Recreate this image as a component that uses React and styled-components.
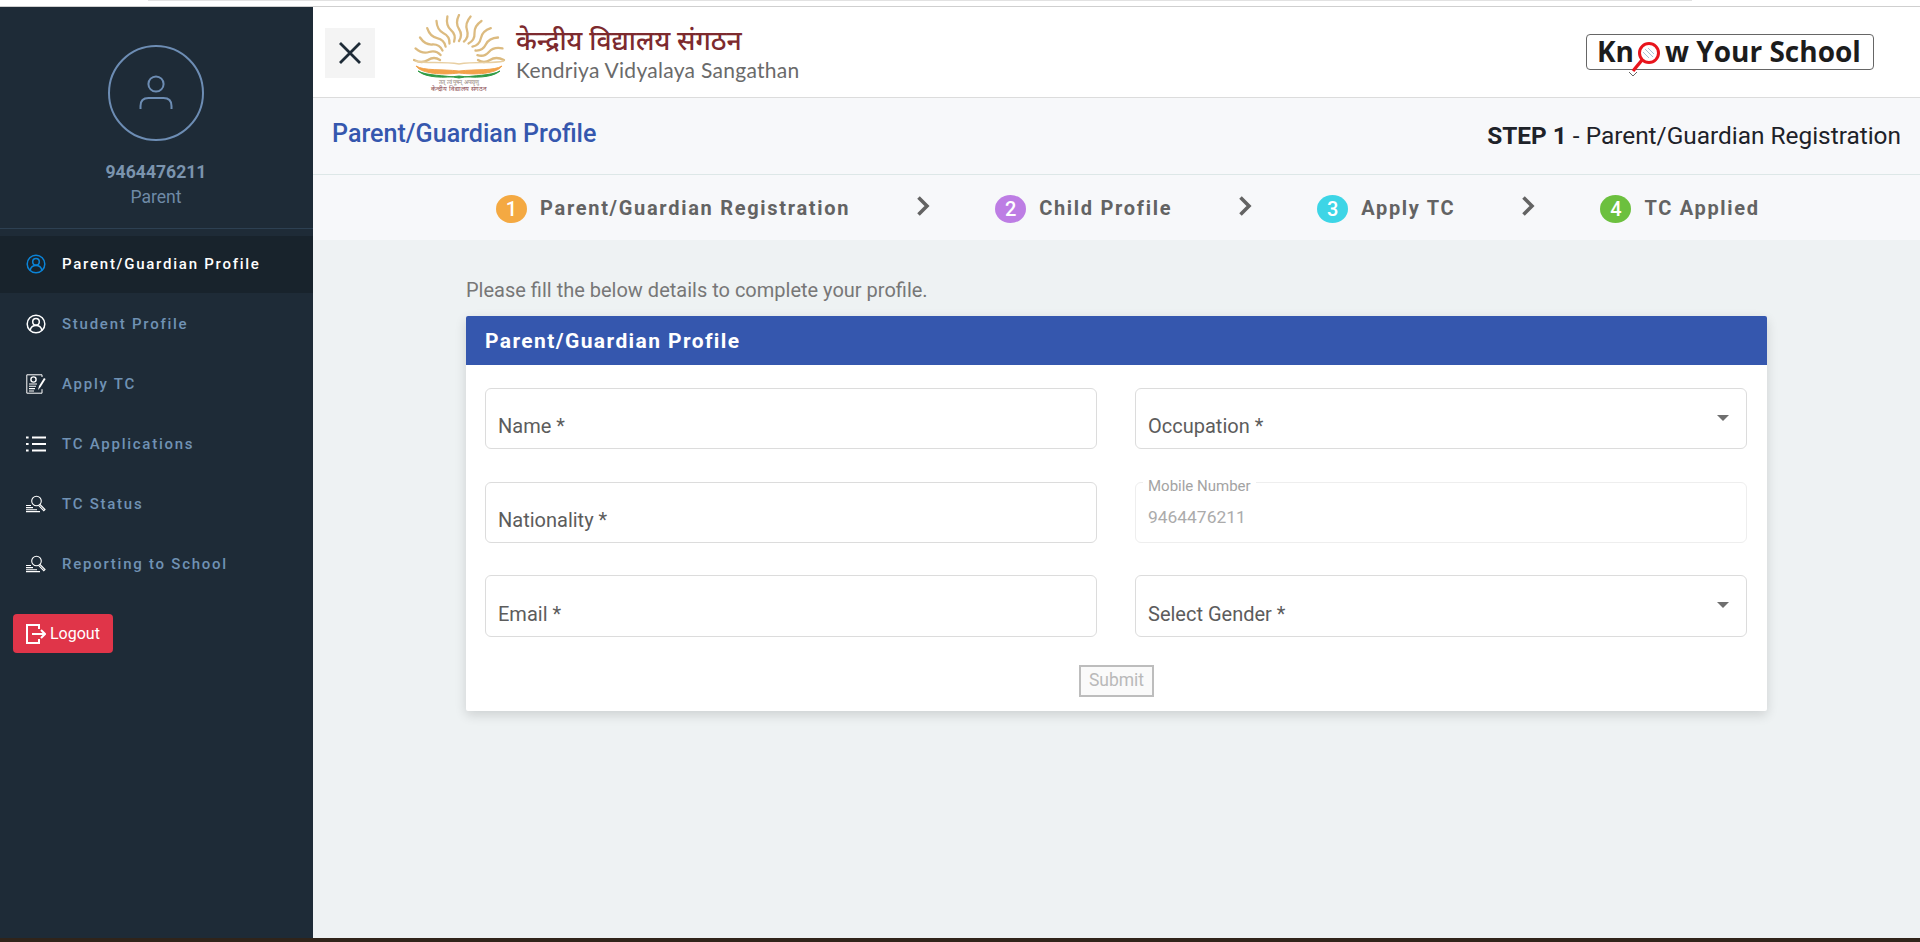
import React from "react";
import styled, { createGlobalStyle } from "styled-components";

const GlobalStyle = createGlobalStyle`
  html, body { margin: 0; padding: 0; background: #fff; }
  body { font-family: Roboto, "Liberation Sans", sans-serif; overflow: hidden; }
  * { box-sizing: border-box; }
`;

const Page = styled.div`
  width: 1920px;
  height: 942px;
  display: flex;
  flex-direction: column;
  overflow: hidden;
`;
const BrowserEdge = styled.div`
  height: 7px;
  flex: none;
  background: #fff;
  border-bottom: 1px solid #cfcfcf;
  padding: 0 228px 0 148px;
  &::before {
    content: "";
    display: block;
    height: 1px;
    background: #e2e2e2;
  }
`;
const TaskEdge = styled.div`
  height: 4px;
  flex: none;
  background: #30241a;
`;
const Shell = styled.div`
  flex: 1;
  display: flex;
  min-height: 0;
`;

const Sidebar = styled.aside`
  width: 313px;
  flex: none;
  background: #1e2b37;
  display: flex;
  flex-direction: column;
`;
const UserBox = styled.div`
  height: 222px;
  padding: 38px 1px 0 0;
  border-bottom: 1px solid #2d4052;
  display: flex;
  flex-direction: column;
  align-items: center;
  flex: none;
`;
const Avatar = styled.div`
  width: 96px;
  height: 96px;
  border-radius: 50%;
  border: 2px solid #6d8db4;
  display: flex;
  align-items: center;
  justify-content: center;
  color: #6d8db4;
`;
const Phone = styled.div`
  margin-top: 21px;
  font-size: 17.6px;
  line-height: 20px;
  font-weight: 700;
  color: #7b94ae;
`;
const Role = styled.div`
  margin-top: 5px;
  font-size: 17.6px;
  line-height: 20px;
  color: #6f8aa6;
`;
const Nav = styled.nav`
  margin-top: 7px;
  display: flex;
  flex-direction: column;
  gap: 3px;
`;
const NavRow = styled.a`
  height: 57px;
  padding: 0 0 2px 26px;
  display: flex;
  align-items: center;
  gap: 16px;
  font-size: 15px;
  font-weight: 500;
  letter-spacing: 1.75px;
  color: ${(p) => (p.$active ? "#fff" : "#7092b4")};
  background: ${(p) => (p.$active ? "#18232c" : "transparent")};
  svg {
    flex: none;
    color: ${(p) => (p.$active ? "#0b84d8" : "#fff")};
  }
`;
const LogoutButton = styled.button`
  margin: 21px 0 0 13px;
  width: 100px;
  height: 39px;
  border: 0;
  border-radius: 4px;
  background: #e03549;
  color: #fff;
  font: 400 16px Roboto, sans-serif;
  display: flex;
  align-items: center;
  padding: 0 0 0 13px;
  gap: 4px;
`;

const Main = styled.main`
  flex: 1;
  min-width: 0;
  display: flex;
  flex-direction: column;
  background: #eef2f3;
`;
const Header = styled.header`
  height: 91px;
  flex: none;
  background: #fff;
  border-bottom: 1px solid #dcdcdc;
  display: flex;
  align-items: center;
  padding: 1px 46px 0 12px;
`;
const CloseButton = styled.button`
  width: 50px;
  height: 50px;
  border: 0;
  padding: 0;
  background: #f4f4f4;
  color: #1e2b37;
  display: flex;
  align-items: center;
  justify-content: center;
`;
const LogoMark = styled.svg`
  margin-left: 38px;
  flex: none;
`;
const LogoText = styled.div`
  margin-left: 10px;
  display: flex;
  flex-direction: column;
`;
const HindiName = styled.div`
  font-family: "Noto Sans", "Noto Sans Devanagari", "Lohit Devanagari", sans-serif;
  font-size: 26.5px;
  line-height: 34px;
  font-weight: 500;
  color: #7d2a2e;
`;
const EnglishName = styled.div`
  font-family: Lato, sans-serif;
  font-size: 21px;
  line-height: 26px;
  letter-spacing: 0.28px;
  color: #6a6a6a;
`;
const KnowSchool = styled.div`
  position: relative;
  margin-left: auto;
  margin-bottom: 2px;
  width: 288px;
  height: 36px;
  border: 1px solid #666;
  border-radius: 4px;
  padding-left: 10px;
  font-family: "Open Sans", sans-serif;
  font-size: 28px;
  line-height: 33px;
  font-weight: 700;
  color: #1c1c1c;
  white-space: nowrap;
`;
const LensLetter = styled.span`
  position: relative;
  display: inline-block;
  width: 31px;
  color: transparent;
  svg {
    position: absolute;
    left: 0;
    top: 6px;
    overflow: visible;
  }
`;

const TitleBar = styled.div`
  height: 77px;
  flex: none;
  background: #f7f8fa;
  border-bottom: 1px solid #dde7e7;
  padding: 0 19px;
  display: flex;
  align-items: center;
  justify-content: space-between;
`;
const PageTitle = styled.h1`
  margin: 0 0 5px;
  font-size: 25.1px;
  font-weight: 500;
  color: #3557ae;
`;
const StepTitle = styled.div`
  margin-bottom: 1px;
  font-size: 24.4px;
  color: #1e2229;
  b { font-weight: 700; }
`;
const Stepper = styled.div`
  height: 65px;
  flex: none;
  background: #f7f8fa;
  padding: 2px 0 0 183px;
  display: flex;
  align-items: center;
`;
const StepDot = styled.span`
  width: 31px;
  height: 28px;
  border-radius: 50%;
  background: ${(p) => p.$color};
  color: #fff;
  font-size: 20px;
  font-weight: 500;
  display: flex;
  align-items: center;
  justify-content: center;
  flex: none;
`;
const StepName = styled.span`
  margin-left: 13px;
  position: relative;
  top: -1px;
  font-size: 20px;
  font-weight: 700;
  letter-spacing: 1.7px;
  color: #636363;
`;
const StepArrow = styled.svg`
  margin: 0 65px 0 66px;
  position: relative;
  top: -3px;
  flex: none;
`;

const Content = styled.div`
  padding: 38px 153px 0;
`;
const Intro = styled.p`
  margin: 0 0 14px;
  font-size: 20px;
  line-height: 24px;
  color: #777;
`;
const Card = styled.section`
  background: #fff;
  border-radius: 2px;
  box-shadow: 0 4px 12px rgba(0, 0, 0, 0.14);
`;
const CardHead = styled.h2`
  margin: 0;
  height: 49px;
  padding-left: 19px;
  background: #3557ae;
  color: #fff;
  font-size: 21px;
  font-weight: 700;
  letter-spacing: 1.4px;
  display: flex;
  align-items: center;
  border-radius: 2px 2px 0 0;
`;
const FormGrid = styled.div`
  padding: 23px 20px 0 19px;
  display: grid;
  grid-template-columns: 612px 612px;
  grid-template-rows: 61px 61px 62px;
  column-gap: 38px;
  row-gap: 32.5px;
`;
const Field = styled.div`
  position: relative;
  border: 1px solid ${(p) => (p.$disabled ? "#eeeeee" : "#dcdcdc")};
  border-radius: 6px;
  padding: 0 12px ${(p) => (p.$disabled ? "13px" : "10px")};
  display: flex;
  align-items: flex-end;
  font-size: ${(p) => (p.$disabled ? "17.4px" : "20px")};
  line-height: 24px;
  color: ${(p) => (p.$disabled ? "#ababab" : "#5c5c5c")};
`;
const Caret = styled.span`
  position: absolute;
  right: 17px;
  top: 26px;
  width: 0;
  height: 0;
  border-left: 6px solid transparent;
  border-right: 6px solid transparent;
  border-top: 6px solid #6f6f6f;
`;
const FloatLabel = styled.span`
  position: absolute;
  left: 7px;
  top: -5px;
  padding: 0 5px;
  background: #fff;
  font-size: 15px;
  line-height: 16px;
  color: #a3a3a3;
`;
const SubmitRow = styled.div`
  padding: 28px 0 14px;
  display: flex;
  justify-content: center;
`;
const SubmitButton = styled.button`
  width: 75px;
  height: 32px;
  padding: 0 0 2px;
  border: 2px solid #bdbdbd;
  background: #fafafa;
  color: #b9b9b9;
  font: 400 17.5px Roboto, sans-serif;
`;

const UserIcon = () => (
  <svg width="20" height="20" viewBox="0 0 20 20" fill="none" stroke="currentColor" strokeWidth="1.5">
    <circle cx="10" cy="10" r="8.8" />
    <circle cx="10" cy="7.7" r="3.3" />
    <path d="M4.2 16.2c.6-3 2.6-4.6 5.8-4.6s5.2 1.6 5.8 4.6" />
  </svg>
);
const ApplyIcon = () => (
  <svg width="20" height="20" viewBox="0 0 20 20" fill="none" stroke="currentColor">
    <path d="M16 3V.8H.8v18.4H16v-4" />
    <circle cx="7.5" cy="5.5" r="2.6" strokeWidth="1.4" />
    <path d="M3 10h8M3 12.3h7M3 14.6h6M3 17h5" strokeWidth="1.1" />
    <path d="M12 16l1-4 5-8 1.6 1-5 8z" fill="currentColor" stroke="none" />
  </svg>
);
const ListIcon = () => (
  <svg width="20" height="20" viewBox="0 0 20 20" fill="none" stroke="currentColor" strokeWidth="1.8">
    <path d="M6 3.5h14M6 10h14M6 16.5h14" />
    <path d="M0 3.5h2.6M0 10h2.6M0 16.5h2.6" />
  </svg>
);
const StatusIcon = () => (
  <svg width="20" height="20" viewBox="0 0 20 20" fill="none" stroke="currentColor" strokeWidth="1.1">
    <circle cx="10.5" cy="7" r="4.8" />
    <path d="M14 10.5l5 5-1.2 1.2-5-5" />
    <path d="M0 11.5h5M0 13.6h7M0 15.7h11M0 17.6h14" />
  </svg>
);
const LogoutIcon = () => (
  <svg width="20" height="20" viewBox="0 0 20 20" fill="none" stroke="currentColor" strokeWidth="2">
    <path d="M13 5V1H1v18h12v-4" />
    <path d="M6 10h13M15 6l4 4-4 4" />
  </svg>
);

const sunRays = Array.from({ length: 13 }, (_, i) => {
  const angle = Math.PI + (i * Math.PI) / 12;
  const point = (r, off) => {
    const x = 46 + r * Math.cos(angle) - off * Math.sin(angle);
    const y = 45 + r * Math.sin(angle) + off * Math.cos(angle);
    return `${x.toFixed(1)} ${y.toFixed(1)}`;
  };
  return `M${point(19, 0)}Q${point(25, 4)} ${point(31, 0)}T${point(45, 0)}`;
});

const Logo = () => (
  <LogoMark width="93" height="78" viewBox="0 -1 93 78">
    {sunRays.map((d) => (
      <path key={d} d={d} fill="none" stroke="#dcbb80" strokeWidth="2.3" strokeLinecap="round" />
    ))}
    <path d="M2 46c12 3 26 0 44 3 18-3 32 0 45-3" fill="none" stroke="#e8cfa2" strokeWidth="1.6" />
    <path d="M3 51c6 8 26 9 43 7 17 2 37 1 43-7-8 5-26 3-43 5-17-2-35 0-43-5z" fill="#f2a24a" stroke="#f2a24a" />
    <path d="M5 56c8 7 26 7 41 5 15 2 33 2 41-5-9 5-26 4-41 7-15-3-32-2-41-7z" fill="#2f9b45" stroke="#2f9b45" />
    <text x="46" y="69" textAnchor="middle" fontSize="5.5" fill="#8a7a70">
      तत् त्वं पूषन् अपावृणु
    </text>
    <text x="46" y="75.5" textAnchor="middle" fontSize="6.5" fill="#8a4a50">
      केन्द्रीय विद्यालय संगठन
    </text>
  </LogoMark>
);

const navItems = [
  { label: "Parent/Guardian Profile", icon: UserIcon, active: true },
  { label: "Student Profile", icon: UserIcon },
  { label: "Apply TC", icon: ApplyIcon },
  { label: "TC Applications", icon: ListIcon },
  { label: "TC Status", icon: StatusIcon },
  { label: "Reporting to School", icon: StatusIcon },
];

const steps = [
  { n: 1, label: "Parent/Guardian Registration", color: "#f4a942" },
  { n: 2, label: "Child Profile", color: "#bd7de4" },
  { n: 3, label: "Apply TC", color: "#3dd5e6" },
  { n: 4, label: "TC Applied", color: "#6cc03e" },
];

export default function App() {
  return (
    <Page>
      <GlobalStyle />
      <BrowserEdge />
      <Shell>
        <Sidebar>
          <UserBox>
            <Avatar>
              <svg width="36" height="36" viewBox="0 0 36 36" fill="none" stroke="currentColor" strokeWidth="2">
                <circle cx="18" cy="9" r="7.6" />
                <path d="M2.5 34v-3c0-5 3-8 8-8h15c5 0 8 3 8 8v3" />
              </svg>
            </Avatar>
            <Phone>9464476211</Phone>
            <Role>Parent</Role>
          </UserBox>
          <Nav>
            {navItems.map((item) => (
              <NavRow key={item.label} $active={item.active}>
                <item.icon />
                {item.label}
              </NavRow>
            ))}
          </Nav>
          <LogoutButton>
            <LogoutIcon />
            Logout
          </LogoutButton>
        </Sidebar>
        <Main>
          <Header>
            <CloseButton>
              <svg width="24" height="24" viewBox="0 0 24 24" fill="none" stroke="currentColor" strokeWidth="2.8">
                <path d="M2 2l20 20M22 2L2 22" />
              </svg>
            </CloseButton>
            <Logo />
            <LogoText>
              <HindiName>केन्द्रीय विद्यालय संगठन</HindiName>
              <EnglishName>Kendriya Vidyalaya Sangathan</EnglishName>
            </LogoText>
            <KnowSchool>
              Kn
              <LensLetter>
                o
                <svg width="26" height="36" viewBox="0 0 26 36" fill="none">
                  <path d="M-5 31l4 4 4-4" stroke="#666" fill="#fff" />
                  <circle cx="15" cy="12" r="9.5" stroke="#e8141c" strokeWidth="3" fill="#fff" />
                  <path d="M11 8l8 8M14 7l6 6M9 11l6 6" stroke="#a9c3d6" strokeWidth="1" />
                  <path d="M8 19L-1 30" stroke="#e8141c" strokeWidth="3.4" />
                </svg>
              </LensLetter>
              w Your School
            </KnowSchool>
          </Header>
          <TitleBar>
            <PageTitle>Parent/Guardian Profile</PageTitle>
            <StepTitle>
              <b>STEP 1</b> - Parent/Guardian Registration
            </StepTitle>
          </TitleBar>
          <Stepper>
            {steps.map((step, i) => (
              <React.Fragment key={step.n}>
                <StepDot $color={step.color}>{step.n}</StepDot>
                <StepName>{step.label}</StepName>
                {i < steps.length - 1 && (
                  <StepArrow width="14" height="20" viewBox="0 0 14 20" fill="none" stroke="#636363" strokeWidth="3.6">
                    <path d="M2.5 1.5L11 10l-8.5 8.5" />
                  </StepArrow>
                )}
              </React.Fragment>
            ))}
          </Stepper>
          <Content>
            <Intro>Please fill the below details to complete your profile.</Intro>
            <Card>
              <CardHead>Parent/Guardian Profile</CardHead>
              <FormGrid>
                <Field>Name *</Field>
                <Field>
                  Occupation *
                  <Caret />
                </Field>
                <Field>Nationality *</Field>
                <Field $disabled>
                  <FloatLabel>Mobile Number</FloatLabel>
                  9464476211
                </Field>
                <Field>Email *</Field>
                <Field>
                  Select Gender *
                  <Caret />
                </Field>
              </FormGrid>
              <SubmitRow>
                <SubmitButton disabled>Submit</SubmitButton>
              </SubmitRow>
            </Card>
          </Content>
        </Main>
      </Shell>
      <TaskEdge />
    </Page>
  );
}
